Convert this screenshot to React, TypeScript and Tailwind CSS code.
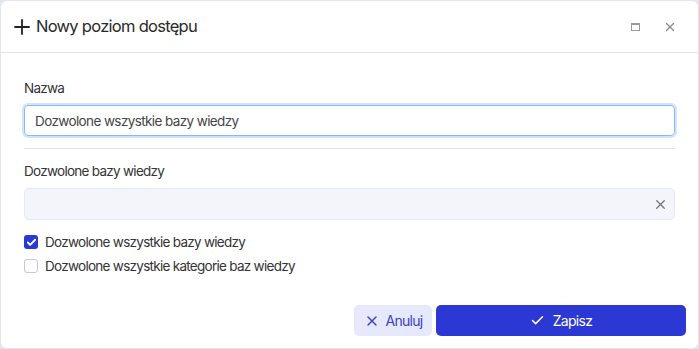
import React, { useState } from 'react';
import { Plus, X, Check } from 'lucide-react';

export default function App() {
  const [name, setName] = useState('Dozwolone wszystkie bazy wiedzy');
  const [allBases, setAllBases] = useState(true);
  const [allCategories, setAllCategories] = useState(false);

  return (
    <div className="w-[699px] h-[349px] bg-[#e2e6f2] pl-px pt-px pr-px overflow-hidden font-['Inter',sans-serif] tracking-[-0.045em]">
      <div className="w-[697px] h-[347px] bg-white rounded-md flex flex-col">
        {/* header */}
        <div className="h-[52px] flex items-center pl-[9px] pr-[21px] border-b border-[#e4e4e7]">
          <Plus className="h-[24px] w-[24px] text-[#222]" strokeWidth={1.8} />
          <span className="ml-[2px] text-[16.5px] text-[#2a2a2a]">Nowy poziom dostępu</span>
          <div className="ml-auto flex items-center gap-[23px]">
            <div className="w-[9px] h-[8px] border border-[#999] border-t-[2px]" />
            <X className="h-[14px] w-[14px] text-[#8a8a8a]" strokeWidth={2.2} />
          </div>
        </div>

        {/* body */}
        <div className="px-[23px] pt-[25px] flex flex-col">
          <label className="text-[13.5px] text-[#333] leading-[20px]">Nazwa</label>
          <input
            value={name}
            onChange={(e) => setName(e.target.value)}
            className="mt-[7px] h-[31px] w-full rounded-[4px] border border-[#85b7fb] ring-[2px] ring-[#d2e5fd] px-[10px] text-[13.5px] text-[#444] outline-none tracking-[-0.045em]"
          />
          <div className="mt-[12px] border-t border-[#e4e4e7]" />
          <label className="mt-[12px] text-[13.5px] text-[#333] leading-[20px]">Dozwolone bazy wiedzy</label>
          <div className="mt-[7px] h-[32px] rounded-[5px] bg-[#f4f5fb] border border-[#e5e8f8] flex items-center justify-end pr-[6px]">
            <X className="h-[15px] w-[15px] text-[#777]" strokeWidth={2.2} />
          </div>

          <div className="mt-[14px] flex flex-col gap-[8px]">
            <label className="flex items-center gap-[7px] cursor-pointer">
              <button
                onClick={() => setAllBases(!allBases)}
                className={`w-[14px] h-[14px] rounded-[3px] flex items-center justify-center ${allBases ? 'bg-[#2c38d4]' : 'border border-[#c7c7cc] bg-white'}`}
              >
                {allBases && <Check className="w-[11px] h-[11px] text-white" strokeWidth={4} />}
              </button>
              <span className="text-[13.5px] text-[#333] leading-[16px]">Dozwolone wszystkie bazy wiedzy</span>
            </label>
            <label className="flex items-center gap-[7px] cursor-pointer">
              <button
                onClick={() => setAllCategories(!allCategories)}
                className={`w-[14px] h-[14px] rounded-[3px] flex items-center justify-center ${allCategories ? 'bg-[#2c38d4]' : 'border border-[#c7c7cc] bg-white'}`}
              >
                {allCategories && <Check className="w-[11px] h-[11px] text-white" strokeWidth={4} />}
              </button>
              <span className="text-[13.5px] text-[#333] leading-[16px]">Dozwolone wszystkie kategorie baz wiedzy</span>
            </label>
          </div>
        </div>

        {/* footer */}
        <div className="mt-auto mb-[12px] flex justify-end gap-[4px] pr-[12px]">
          <button className="h-[31px] w-[78px] rounded-[5px] bg-[#e6e9fc] text-[#3a3fc8] text-[14px] flex items-center justify-center gap-[6px]">
            <X className="w-[16px] h-[16px]" strokeWidth={2.2} />
            Anuluj
          </button>
          <button className="h-[31px] w-[250px] rounded-[5px] bg-[#2b38d3] text-white text-[14px] flex items-center justify-center gap-[8px]">
            <Check className="w-[15px] h-[15px]" strokeWidth={2.4} />
            Zapisz
          </button>
        </div>
      </div>
    </div>
  );
}
